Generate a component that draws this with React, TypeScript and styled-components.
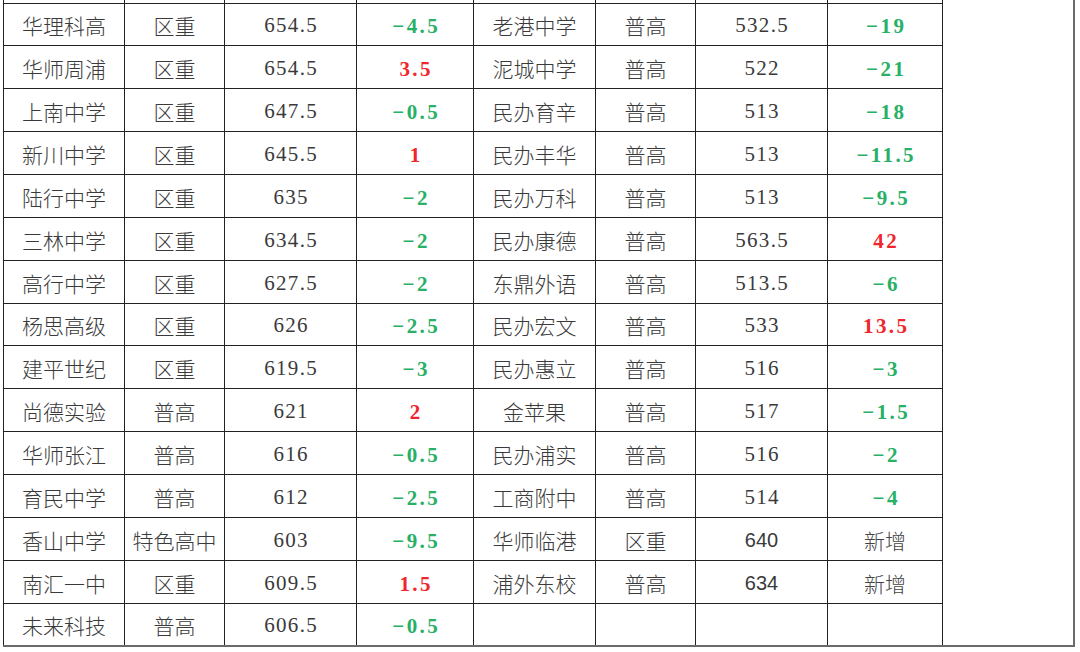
import React from "react";
import styled, { createGlobalStyle } from "styled-components";

type Entry = [string, string, string, string] | null;

const GlobalStyle = createGlobalStyle`
	html, body {
		margin: 0;
		padding: 0;
		background: #ffffff;
	}
	body {
		font-family: "Noto Sans CJK SC", "Liberation Serif", serif;
	}
`;

const left: Entry[] = [
	["华理科高", "区重", "654.5", "-4.5"],
	["华师周浦", "区重", "654.5", "3.5"],
	["上南中学", "区重", "647.5", "-0.5"],
	["新川中学", "区重", "645.5", "1"],
	["陆行中学", "区重", "635", "-2"],
	["三林中学", "区重", "634.5", "-2"],
	["高行中学", "区重", "627.5", "-2"],
	["杨思高级", "区重", "626", "-2.5"],
	["建平世纪", "区重", "619.5", "-3"],
	["尚德实验", "普高", "621", "2"],
	["华师张江", "普高", "616", "-0.5"],
	["育民中学", "普高", "612", "-2.5"],
	["香山中学", "特色高中", "603", "-9.5"],
	["南汇一中", "区重", "609.5", "1.5"],
	["未来科技", "普高", "606.5", "-0.5"]
];

const right: Entry[] = [
	["老港中学", "普高", "532.5", "-19"],
	["泥城中学", "普高", "522", "-21"],
	["民办育辛", "普高", "513", "-18"],
	["民办丰华", "普高", "513", "-11.5"],
	["民办万科", "普高", "513", "-9.5"],
	["民办康德", "普高", "563.5", "42"],
	["东鼎外语", "普高", "513.5", "-6"],
	["民办宏文", "普高", "533", "13.5"],
	["民办惠立", "普高", "516", "-3"],
	["金苹果", "普高", "517", "-1.5"],
	["民办浦实", "普高", "516", "-2"],
	["工商附中", "普高", "514", "-4"],
	["华师临港", "区重", "640", "新增"],
	["浦外东校", "普高", "634", "新增"],
	null
];

// scores typed in a different font in the source sheet
const sansScores = new Set(["640", "634"]);

const widths = [121, 100, 132, 117, 122, 100, 132, 115, 131];

const Page = styled.div`
	padding: 0 0 0 3px;
`;

const Sheet = styled.table`
	border-collapse: collapse;
	table-layout: fixed;
	width: 1070px;
	color: #3a3a3a;
	border-bottom: 2px solid #6a6a6a;
`;

const EdgeRow = styled.tr`
	height: 3px;
	font-size: 0;
`;

const EdgeCell = styled.td`
	padding: 0;
	border-left: 1px solid #222222;
	border-right: 1px solid #222222;
	border-bottom: 1px solid #222222;
`;

const SpareCell = styled.td`
	padding: 0;
	border-left: 1px solid #222222;
	border-right: 2px solid #6a6a6a;
`;

const Row = styled.tr`
	height: 42.87px;
`;

const Cell = styled.td<{ $kind?: "name" | "score" | "delta"; $sans?: boolean }>`
	padding: 3px 0 0;
	border: 1px solid #222222;
	text-align: center;
	vertical-align: middle;
	white-space: nowrap;
	line-height: 1;
	font-size: ${(p) => (p.$kind === "score" && p.$sans ? "20px" : "21px")};
	font-weight: ${(p) => (p.$kind === "name" || p.$sans ? 300 : 400)};
	font-family: ${(p) =>
		p.$kind === "score"
			? p.$sans
				? `"Liberation Sans", "Noto Sans CJK SC", sans-serif`
				: `"Liberation Serif", "Noto Sans CJK SC", serif`
			: `"Noto Sans CJK SC", sans-serif`};
	letter-spacing: ${(p) => (p.$kind === "score" && !p.$sans ? "1.3px" : "0")};
	text-indent: ${(p) => (p.$kind === "score" && !p.$sans ? "1.3px" : "0")};
`;

const Delta = styled.span<{ $tone: "up" | "down" | "plain" }>`
	font-family: ${(p) =>
		p.$tone === "plain"
			? `"Noto Sans CJK SC", sans-serif`
			: `"Liberation Serif", "Noto Sans CJK SC", serif`};
	font-size: 21px;
	font-weight: ${(p) => (p.$tone === "plain" ? 300 : 700)};
	letter-spacing: ${(p) => (p.$tone === "plain" ? "0" : "2.4px")};
	margin-left: ${(p) => (p.$tone === "plain" ? "0" : "2.4px")};
	color: ${(p) =>
		p.$tone === "up" ? "#f0262d" : p.$tone === "down" ? "#27b066" : "#444444"};
`;

const DeltaText = ({ value }: { value: string }) => {
	const tone = value.startsWith("-") ? "down" : /\d/.test(value) ? "up" : "plain";
	const shown = tone === "down" ? "−" + value.slice(1) : value;
	return <Delta $tone={tone}>{shown}</Delta>;
};

const Group = ({ entry }: { entry: Entry }) => {
	if (!entry) {
		return (
			<>
				<Cell />
				<Cell />
				<Cell />
				<Cell />
			</>
		);
	}
	const [name, level, score, delta] = entry;
	return (
		<>
			<Cell $kind="name">{name}</Cell>
			<Cell $kind="name">{level}</Cell>
			<Cell $kind="score" $sans={sansScores.has(score)}>
				{score}
			</Cell>
			<Cell $kind="delta">
				<DeltaText value={delta} />
			</Cell>
		</>
	);
};

export default function App() {
	return (
		<Page>
			<GlobalStyle />
			<Sheet>
				<colgroup>
					{widths.map((w, i) => (
						<col key={i} style={{ width: w }} />
					))}
				</colgroup>
				<tbody>
					<EdgeRow>
						{widths.slice(0, 8).map((_, i) => (
							<EdgeCell key={i} />
						))}
						<SpareCell rowSpan={left.length + 1} />
					</EdgeRow>
					{left.map((entry, i) => (
						<Row key={i}>
							<Group entry={entry} />
							<Group entry={right[i]} />
						</Row>
					))}
				</tbody>
			</Sheet>
		</Page>
	);
}
